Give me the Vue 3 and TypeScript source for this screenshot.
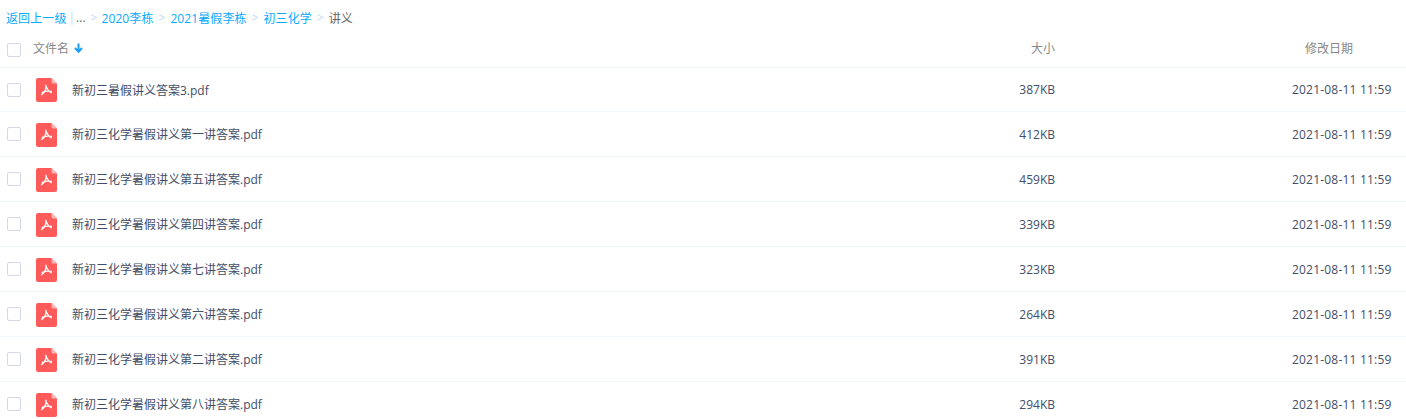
<script setup lang="ts">
interface FileRow { name: string; size: string }
const files: FileRow[] = [
  { name: '新初三暑假讲义答案3.pdf', size: '387KB' },
  { name: '新初三化学暑假讲义第一讲答案.pdf', size: '412KB' },
  { name: '新初三化学暑假讲义第五讲答案.pdf', size: '459KB' },
  { name: '新初三化学暑假讲义第四讲答案.pdf', size: '339KB' },
  { name: '新初三化学暑假讲义第七讲答案.pdf', size: '323KB' },
  { name: '新初三化学暑假讲义第六讲答案.pdf', size: '264KB' },
  { name: '新初三化学暑假讲义第二讲答案.pdf', size: '391KB' },
  { name: '新初三化学暑假讲义第八讲答案.pdf', size: '294KB' },
]
const crumbs = ['2020李栋', '2021暑假李栋', '初三化学']
</script>

<template>
  <div class="page">
    <div class="crumbs">
      <a class="link">返回上一级</a>
      <span class="bar">|</span>
      <span class="dots">...</span>
      <template v-for="(c, i) in crumbs" :key="c">
        <span class="sep" :class="{ first: i === 0 }">&gt;</span>
        <a class="link">{{ c }}</a>
      </template>
      <span class="sep">&gt;</span>
      <span class="current">讲义</span>
    </div>
    <div class="head">
      <span class="check"></span>
      <span class="col-name">文件名
        <svg class="arrow" width="9" height="10" viewBox="0 0 9 10">
          <path d="M4.5 0.500v8M1 5l3.500 3.800 3.500-3.800" fill="none" stroke="#1a9fff" stroke-width="2" />
        </svg>
      </span>
      <span class="col-size">大小</span>
      <span class="col-date">修改日期</span>
    </div>
    <div class="rows">
      <div v-for="f in files" :key="f.name" class="row">
        <span class="check"></span>
        <svg class="icon" width="21" height="24" viewBox="0 0 21 24">
          <path d="M2 0h13.500l5.500 5.500V22a2 2 0 0 1-2 2H2a2 2 0 0 1-2-2V2a2 2 0 0 1 2-2z" fill="#ff5a5a" />
          <path d="M15.500 0l5.500 5.500h-4a1.500 1.500 0 0 1-1.500-1.500z" fill="#ffb3b3" />
          <path d="M9.800 7.500c.8 3 2.200 5.500 5.500 7.300M10 7.500c.4 3.500-1.400 7-4.500 9.200M6.300 14.300c2.400-1 5.200-1.500 9-.9" fill="none" stroke="#fff" stroke-width="1.300" stroke-linecap="round" />
        </svg>
        <span class="name">{{ f.name }}</span>
        <span class="size">{{ f.size }}</span>
        <span class="date">2021-08-11 11:59</span>
      </div>
    </div>
  </div>
</template>

<style>
html, body { margin: 0; background: #fff; overflow: hidden; }
</style>

<style scoped>
.page {
  width: 1406px;
  height: 419px;
  overflow: hidden;
  font: 12px "Open Sans", "Noto Sans CJK SC", sans-serif;
  color: #424e67;
}
.crumbs {
  height: 35px;
  padding-left: 6px;
  display: flex;
  align-items: center;
  box-sizing: border-box;
  white-space: nowrap;
}
.link { color: #09aaff; letter-spacing: 0.1px; }
.bar { color: #c5d8f3; margin: 0 1px 0 2px; }
.dots { color: #666; }
.sep { color: #c5d8f3; margin: 0 5px; }
.sep.first { margin: 0 4px 0 5px; }
.current { color: #666; }
.head {
  height: 33px;
  display: flex;
  align-items: center;
  box-sizing: border-box;
  padding: 0 0 2px 7px;
  border-bottom: 1px solid #f2f6fd;
  color: #888;
}
.col-name, .col-size, .col-date { margin-bottom: 4px; }
.check {
  width: 12px;
  height: 12px;
  border: 1px solid #d4d9e5;
  border-radius: 2px;
  flex: none;
}
.col-name { margin-left: 12px; width: 960px; display: flex; align-items: center; gap: 5px; }
.arrow { flex: none; }
.col-size { width: 62px; text-align: right; flex: none; }
.col-date { margin-left: 250px; }
.row {
  height: 45px;
  display: flex;
  align-items: center;
  box-sizing: border-box;
  padding-left: 7px;
  border-bottom: 1px solid #f2f6fd;
}
.row:first-child { height: 44px; }
.icon { margin: 2px 0 0 15px; flex: none; }
.row:first-child .icon { margin-top: 1px; }
.name { margin-left: 15px; width: 850px; flex: none; }
.size { width: 133px; text-align: right; flex: none; }
.date { margin-left: 237px; letter-spacing: 0.2px; }
</style>
